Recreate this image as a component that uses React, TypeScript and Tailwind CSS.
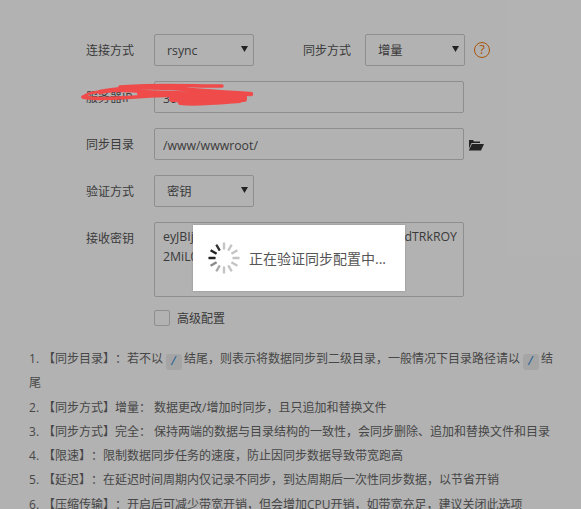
const inputCls =
  "h-8 pt-[2px] border border-[#ccc] rounded-[2px] bg-white text-[#555] text-[12.3px] outline-none";

const Label = ({ children }: { children: React.ReactNode }) => (
  <label className="w-[48px] mr-5 shrink-0 h-8 text-xs text-[#555] leading-[34px] whitespace-nowrap">{children}</label>
);

const Select = ({ value }: { value: string }) => (
  <div className="relative w-[100px] h-8">
    <select defaultValue={value} className={`${inputCls} w-full appearance-none pl-3`}>
      <option>{value}</option>
    </select>
    <svg className="absolute right-[6px] top-[12px]" width="7" height="6" viewBox="0 0 7 6">
      <path d="M0 0h7L3.5 6z" fill="#333" />
    </svg>
  </div>
);

const Code = () => (
  <code className="inline-block w-4 h-4 mx-[2.5px] rounded-[3px] bg-[#ececec] text-center text-[#2a87d8] text-xs leading-4 align-[-2px]">
    /
  </code>
);

const Num = ({ n }: { n: number }) => <span className="inline-block w-[14px]">{n}.</span>;

// starts at 9 o'clock and goes clockwise
const shades = ["#222", "#222", "#333", "#c4c4c4", "#c4c4c4", "#c4c4c4", "#c4c4c4", "#c4c4c4", "#c4c4c4", "#c4c4c4", "#aaa", "#888"];

const Spinner = () => (
  <svg width="32" height="32" viewBox="-16 -16 32 32">
    {shades.map((color, i) => (
      <rect
        key={i}
        x="-15.5"
        y="-1.2"
        width="7"
        height="2.4"
        rx="0.5"
        fill={color}
        transform={`rotate(${i * 30})`}
      />
    ))}
  </svg>
);

export default function App() {
  return (
    <div
      className="relative w-[581px] h-[509px] overflow-hidden bg-white"
      style={{ fontFamily: '"Open Sans", "Noto Sans CJK SC", sans-serif' }}
    >
      <div className="pt-[34px] pl-[86px]">
        <div className="flex h-8 mb-[15px]">
          <Label>连接方式</Label>
          <Select value="rsync" />
          <span className="ml-[49px] mr-[14px] text-xs text-[#555] leading-[34px]">同步方式</span>
          <Select value="增量" />
          <div className="ml-[9px] mt-2 w-4 h-4 rounded-full border-[1.5px] border-[#f07a10] text-[#f07a10] text-[13px] leading-[13px] text-center">
            ?
          </div>
        </div>

        <div className="flex h-8 mb-[15px]">
          <Label>服务器IP</Label>
          <input className={`${inputCls} w-[310px] px-2`} defaultValue="30" />
        </div>

        <div className="flex items-center h-8 mb-[15px]">
          <Label>同步目录</Label>
          <input className={`${inputCls} w-[310px] px-2`} defaultValue="/www/wwwroot/" />
          <svg className="ml-[4px]" width="16" height="13" viewBox="0 0 16 13">
            <path d="M1 2h4l1 1.5h6V5H3.5L1 10.5z" fill="#333" />
            <path d="M3.9 6H16l-3 6.5H.8z" fill="#333" />
          </svg>
        </div>

        <div className="flex h-8 mb-[15px]">
          <Label>验证方式</Label>
          <Select value="密钥" />
        </div>

        <div className="flex h-[75px] mb-[13px]">
          <Label>接收密钥</Label>
          <textarea
            className="w-[310px] h-[75px] px-2 py-[4px] border border-[#ccc] rounded-[2px] text-[#555] text-[12.3px] leading-5 resize-none outline-none overflow-hidden whitespace-pre"
            defaultValue={"eyJBIjoiNzQ2YzFhODk5ZmQ5MjEwN2ZjMZdTRkROY\n2MiL0"}
          />
        </div>

        <div className="flex items-center pl-[68px] h-4">
          <span className="w-4 h-4 border border-[#ccc] rounded-[2px] bg-white" />
          <span className="ml-[7px] pt-[2px] text-xs text-[#555]">高级配置</span>
        </div>
      </div>

      <ul className="mt-[21px] pl-[29px] pr-[27px] text-xs text-[#666] leading-[24.3px] [text-spacing-trim:space-all]">
        <li>
          <Num n={1} />【同步目录】：若不以<Code />结尾，则表示将数据同步到二级目录，一般情况下目录路径请以<Code />结尾
        </li>
        <li><Num n={2} />【同步方式】增量： 数据更改/增加时同步，且只追加和替换文件</li>
        <li><Num n={3} />【同步方式】完全： 保持两端的数据与目录结构的一致性，会同步删除、追加和替换文件和目录</li>
        <li><Num n={4} />【限速】：限制数据同步任务的速度，防止因同步数据导致带宽跑高</li>
        <li><Num n={5} />【延迟】：在延迟时间周期内仅记录不同步，到达周期后一次性同步数据，以节省开销</li>
        <li><Num n={6} />【压缩传输】：开启后可减少带宽开销，但会增加CPU开销，如带宽充足，建议关闭此选项</li>
      </ul>

      {/* shade over the whole page */}
      <div className="absolute inset-0 bg-black/30" />

      {/* loading message */}
      <div className="absolute left-[193px] top-[225px] w-[212px] h-[66px] flex items-center pl-[15px] bg-white shadow-[0_0_2px_rgba(0,0,0,0.2)]">
        <Spinner />
        <span className="ml-[9px] pt-[2px] text-sm text-[#555]">正在验证同步配置中...</span>
      </div>

      {/* red scribble over the redacted field */}
      <svg className="absolute left-0 top-0 pointer-events-none" width="581" height="509" fill="none" stroke="#ef4b4b" strokeLinecap="round">
        <path d="M120 87C150 84 190 86 222 86" strokeWidth="3.5" />
        <path d="M100 92C130 86 170 87 190 90C215 92 235 93 251 94" strokeWidth="4.5" />
        <path d="M83 97C90 90 115 90 150 92" strokeWidth="3" />
        <path d="M83 97C95 100 125 98 150 96C170 95 200 95 240 97" strokeWidth="3.5" />
        <path d="M140 93C180 94 220 95 244 97" strokeWidth="6" />
        <path d="M172 99C195 100 220 99 244 99" strokeWidth="6" />
        <path d="M180 103C195 105 215 103 240 101" strokeWidth="4" />
      </svg>
    </div>
  );
}
